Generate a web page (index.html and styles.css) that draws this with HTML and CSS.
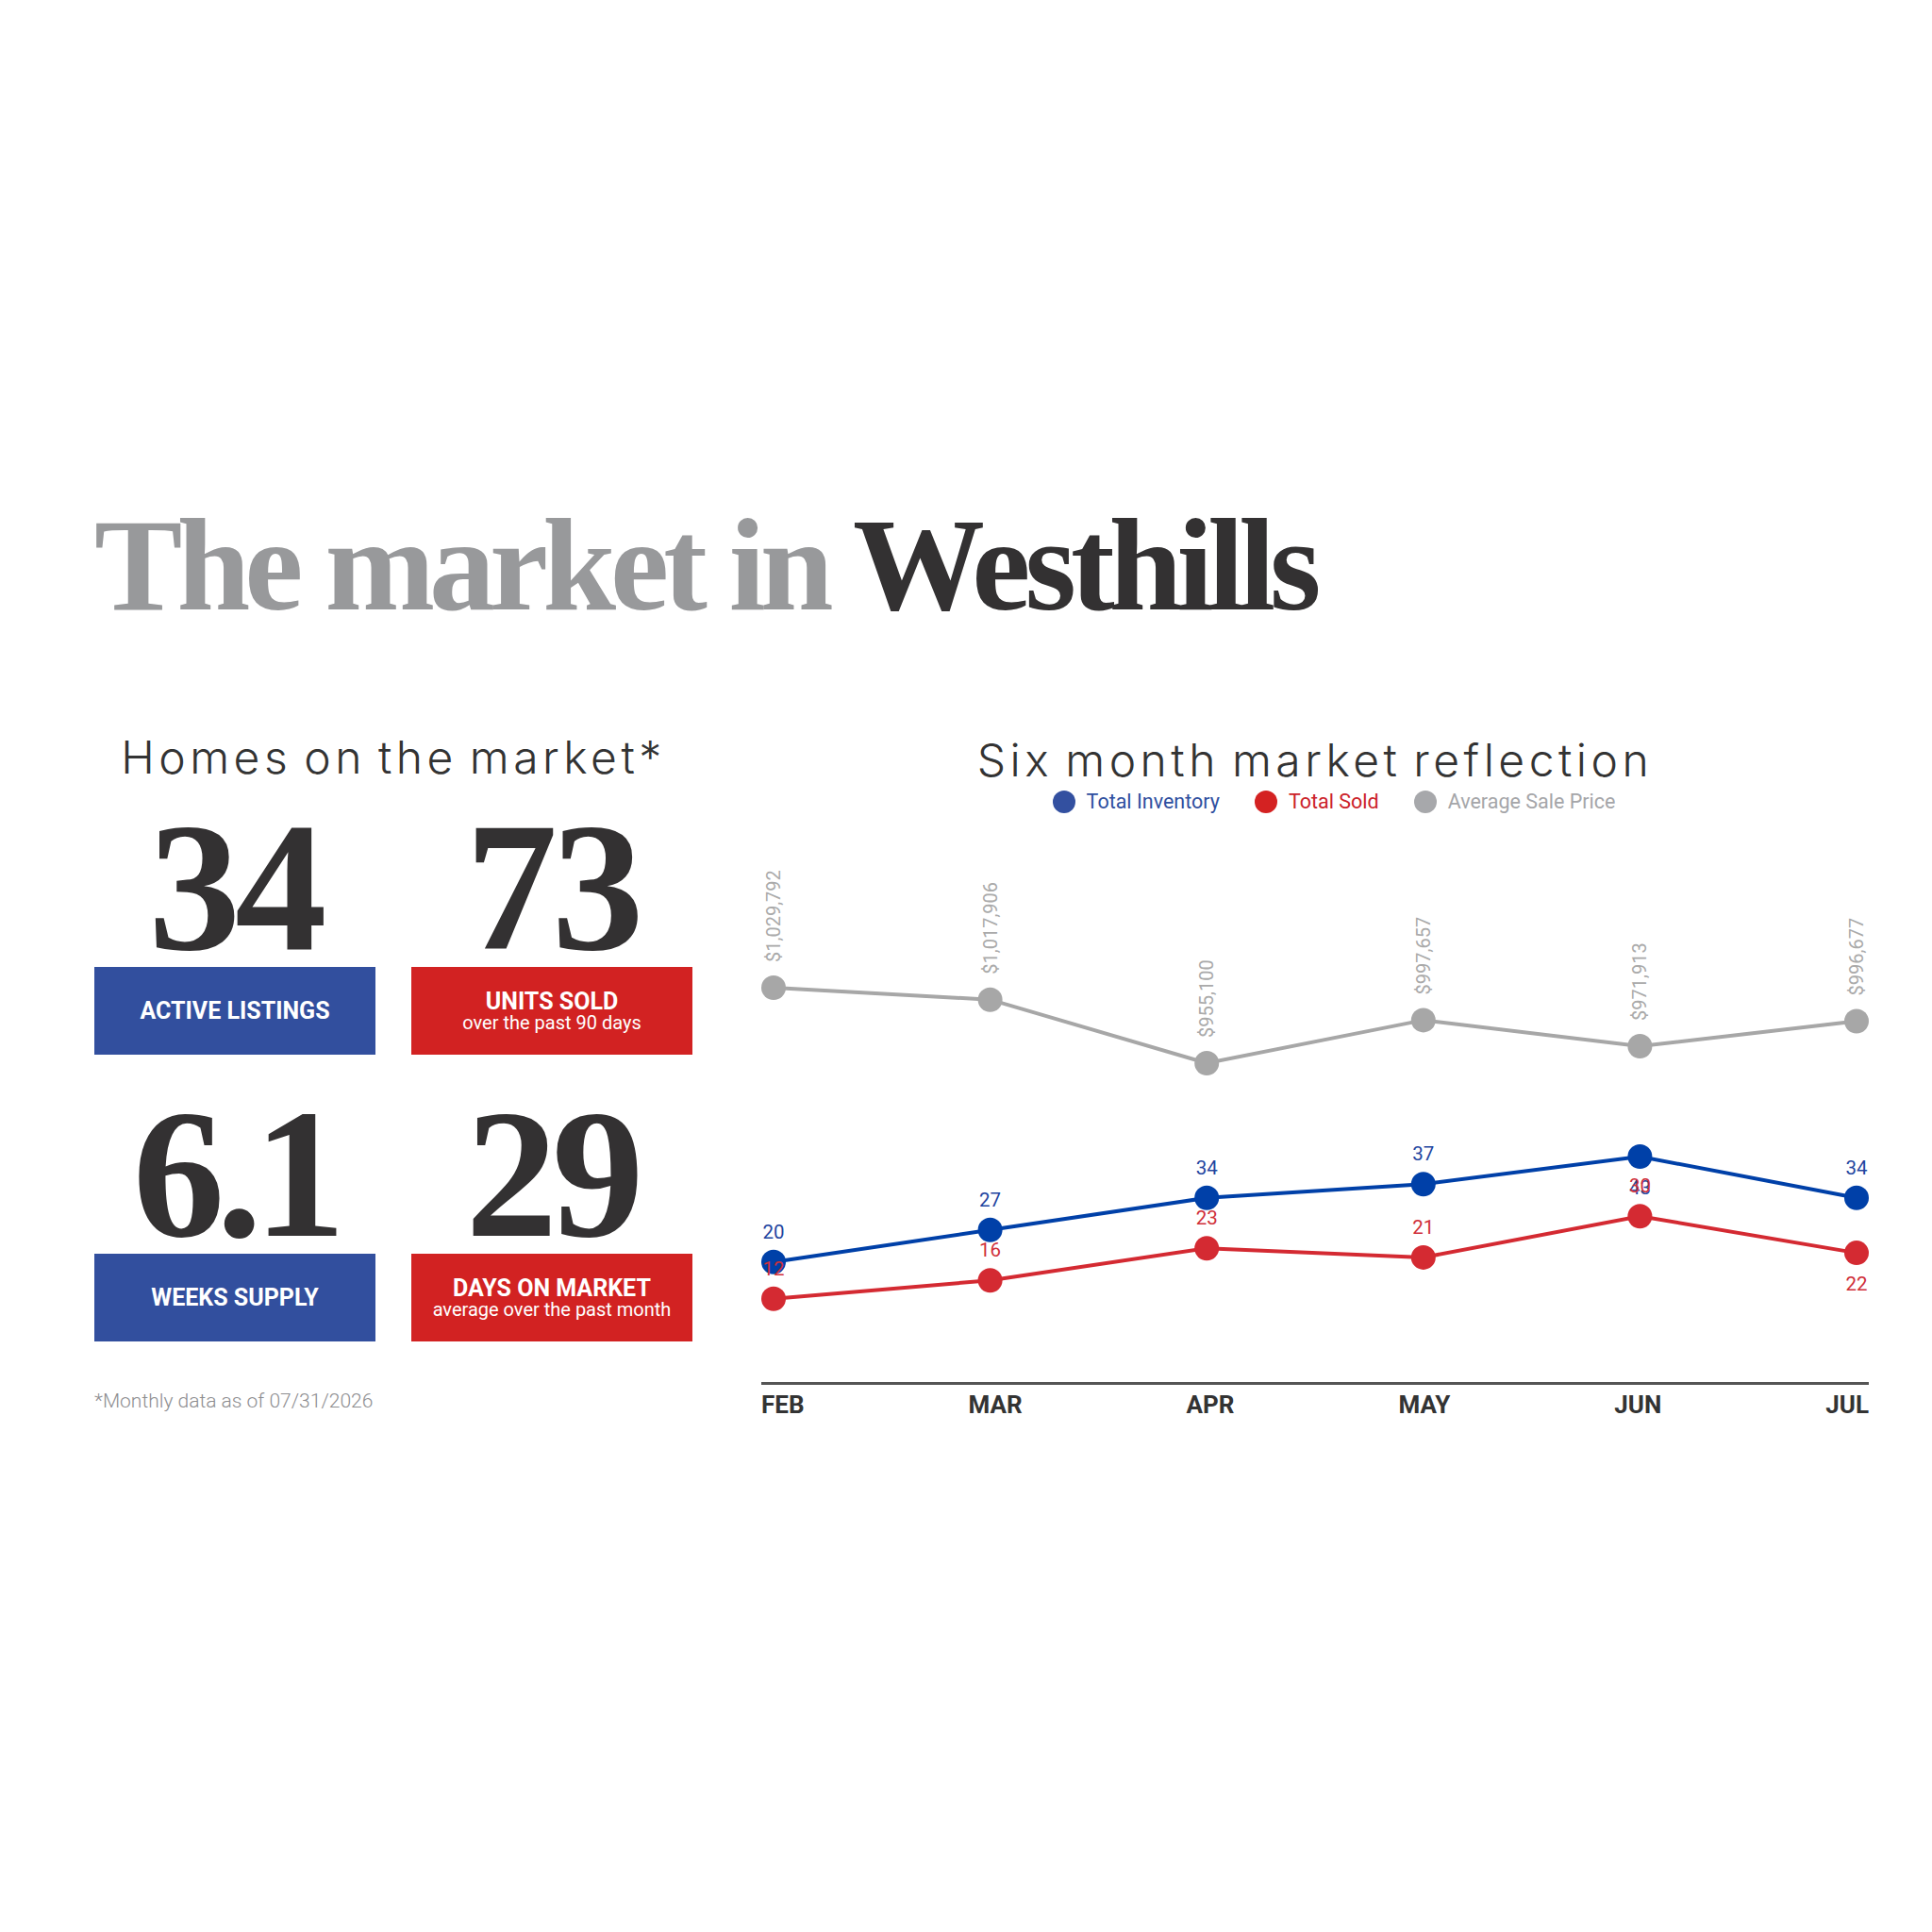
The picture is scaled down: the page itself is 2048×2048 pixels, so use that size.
FILE: index.html
```html
<!DOCTYPE html>
<html lang="en">
<head>
<meta charset="utf-8">
<title>The market in Westhills</title>
<link rel="stylesheet" href="styles.css">
</head>
<body>
<div class="page">
  <h1 class="title"><span class="muted">The market in</span> Westhills</h1>
  <div class="content">
    <section class="homes">
      <h2 class="section-title">Homes on the market*</h2>
      <div class="stats">
        <div class="stat">
          <div class="stat-num">34</div>
          <div class="stat-label blue"><strong>ACTIVE LISTINGS</strong></div>
        </div>
        <div class="stat">
          <div class="stat-num">73</div>
          <div class="stat-label red"><strong>UNITS SOLD</strong><small>over the past 90 days</small></div>
        </div>
        <div class="stat">
          <div class="stat-num tight">6.1</div>
          <div class="stat-label blue"><strong>WEEKS SUPPLY</strong></div>
        </div>
        <div class="stat">
          <div class="stat-num">29</div>
          <div class="stat-label red"><strong>DAYS ON MARKET</strong><small>average over the past month</small></div>
        </div>
      </div>
      <p class="note">*Monthly data as of 07/31/2026</p>
    </section>
    <section class="chart">
      <h2 class="section-title chart-title">Six month market reflection</h2>
      <ul class="legend">
        <li class="legend-item inv"><span class="dot dot-blue"></span>Total Inventory</li>
        <li class="legend-item sold"><span class="dot dot-red"></span>Total Sold</li>
        <li class="legend-item price"><span class="dot dot-gray"></span>Average Sale Price</li>
      </ul>
      <svg class="plot" viewBox="0 0 1174 564" width="1174" height="564" xmlns="http://www.w3.org/2000/svg">
        <g class="series-gray">
          <polyline points="13,146 242.6,158.7 472.2,226 701.8,180.4 931.4,208 1161,181.5" fill="none" stroke="#a7a7a7" stroke-width="4"/>
          <circle cx="13" cy="146" r="13" fill="#a7a7a7"/>
          <circle cx="242.6" cy="158.7" r="13" fill="#a7a7a7"/>
          <circle cx="472.2" cy="226" r="13" fill="#a7a7a7"/>
          <circle cx="701.8" cy="180.4" r="13" fill="#a7a7a7"/>
          <circle cx="931.4" cy="208" r="13" fill="#a7a7a7"/>
          <circle cx="1161" cy="181.5" r="13" fill="#a7a7a7"/>
        </g>
        <g class="series-blue">
          <polyline points="13,436.8 242.6,402.8 472.2,368.8 701.8,354.2 931.4,325 1161,368.8" fill="none" stroke="#0040a8" stroke-width="4"/>
          <circle cx="13" cy="436.8" r="13" fill="#0040a8"/>
          <circle cx="242.6" cy="402.8" r="13" fill="#0040a8"/>
          <circle cx="472.2" cy="368.8" r="13" fill="#0040a8"/>
          <circle cx="701.8" cy="354.2" r="13" fill="#0040a8"/>
          <circle cx="931.4" cy="325" r="13" fill="#0040a8"/>
          <circle cx="1161" cy="368.8" r="13" fill="#0040a8"/>
        </g>
        <g class="series-red">
          <polyline points="13,475.7 242.6,456.2 472.2,422.2 701.8,431.9 931.4,388.2 1161,427.1" fill="none" stroke="#d42a32" stroke-width="4"/>
          <circle cx="13" cy="475.7" r="13" fill="#d42a32"/>
          <circle cx="242.6" cy="456.2" r="13" fill="#d42a32"/>
          <circle cx="472.2" cy="422.2" r="13" fill="#d42a32"/>
          <circle cx="701.8" cy="431.9" r="13" fill="#d42a32"/>
          <circle cx="931.4" cy="388.2" r="13" fill="#d42a32"/>
          <circle cx="1161" cy="427.1" r="13" fill="#d42a32"/>
        </g>
        <g class="labels-gray">
          <text transform="translate(20,119) rotate(-90)">$1,029,792</text>
          <text transform="translate(249.6,131.7) rotate(-90)">$1,017,906</text>
          <text transform="translate(479.2,199) rotate(-90)">$955,100</text>
          <text transform="translate(708.8,153.4) rotate(-90)">$997,657</text>
          <text transform="translate(938.4,181) rotate(-90)">$971,913</text>
          <text transform="translate(1168,154.5) rotate(-90)">$996,677</text>
        </g>
        <g class="labels-blue">
          <text x="13" y="411.8">20</text>
          <text x="242.6" y="377.8">27</text>
          <text x="472.2" y="343.8">34</text>
          <text x="701.8" y="329.2">37</text>
          <text x="931.4" y="365">43</text>
          <text x="1161" y="343.8">34</text>
        </g>
        <g class="labels-red">
          <text x="13" y="450.7">12</text>
          <text x="242.6" y="431.2">16</text>
          <text x="472.2" y="397.2">23</text>
          <text x="701.8" y="406.9">21</text>
          <text x="931.4" y="363.2">30</text>
          <text x="1161" y="467.1">22</text>
        </g>
      </svg>
      <div class="months">
        <span>FEB</span><span>MAR</span><span>APR</span><span>MAY</span><span>JUN</span><span>JUL</span>
      </div>
    </section>
  </div>
</div>
</body>
</html>
```

FILE: styles.css
```css
body {
  margin: 0;
  background: #ffffff;
}

.page {
  width: 1881px;
  padding: 529px 0 0 100px;
}

.title {
  margin: 0;
  font-family: "Liberation Serif", "Times New Roman", serif;
  font-weight: 700;
  font-size: 140px;
  line-height: 140px;
  letter-spacing: -6px;
  color: #333132;
  white-space: nowrap;
}

.muted {
  color: #98999b;
}

.content {
  display: grid;
  grid-template-columns: 634px 1174px;
  column-gap: 73px;
  margin-top: 110px;
}

.section-title {
  margin: 0;
  font-family: Inter, "DejaVu Sans", sans-serif;
  font-weight: 300;
  font-size: 48px;
  line-height: 48px;
  letter-spacing: 4.5px;
  word-spacing: -5px;
  text-align: center;
  color: #333333;
  white-space: nowrap;
}

.chart-title {
  margin-top: 3px;
}

.stats {
  display: grid;
  grid-template-columns: 298px 298px;
  column-gap: 38px;
  row-gap: 41px;
  margin-top: 28px;
}

.stat-num {
  font-family: "Liberation Serif", "Times New Roman", serif;
  font-weight: 700;
  font-size: 195px;
  line-height: 170px;
  letter-spacing: -6px;
  text-align: center;
  color: #333132;
}

.stat-num.tight {
  letter-spacing: -9px;
}

.stat-label {
  height: 93px;
  display: flex;
  flex-direction: column;
  justify-content: center;
  align-items: center;
  color: #ffffff;
  font-family: Roboto, "Liberation Sans", sans-serif;
}

.stat-label strong {
  font-size: 25px;
  line-height: 24px;
  font-weight: 700;
}

.stat-label small {
  font-size: 20px;
  line-height: 20px;
  font-weight: 400;
}

.blue {
  background: #324f9e;
}

.red {
  background: #d22222;
}

.note {
  margin: 50px 0 0;
  font-family: Roboto, "Liberation Sans", sans-serif;
  font-weight: 300;
  font-size: 21px;
  line-height: 26px;
  color: #8d8d90;
}

.legend {
  display: flex;
  justify-content: center;
  gap: 37px;
  margin: 8px 0 0;
  padding: 0 0 0 40px;
  list-style: none;
  font-family: Roboto, "Liberation Sans", sans-serif;
  font-size: 21.5px;
  line-height: 24px;
}

.legend-item {
  display: flex;
  align-items: center;
  gap: 12px;
}

.dot {
  width: 24px;
  height: 24px;
  border-radius: 50%;
}

.dot-blue { background: #3350a0; }
.dot-red { background: #d42222; }
.dot-gray { background: #a7a8ab; }

.inv { color: #2f4f9f; }
.sold { color: #cc2229; }
.price { color: #a5a6a9; }

.plot {
  display: block;
  margin-top: 39px;
  overflow: visible;
}

.labels-gray text {
  font-family: Roboto, "Liberation Sans", sans-serif;
  font-size: 20px;
  fill: #aaaaaa;
}

.labels-blue text,
.labels-red text {
  font-family: Roboto, "Liberation Sans", sans-serif;
  font-size: 20.5px;
  text-anchor: middle;
}

.labels-blue text { fill: #1f45a0; }
.labels-red text { fill: #d0303a; }

.months {
  display: flex;
  justify-content: space-between;
  border-top: 3px solid #555555;
  padding-top: 6px;
  font-family: Roboto, "Liberation Sans", sans-serif;
  font-weight: 700;
  font-size: 26px;
  line-height: 30px;
  color: #333333;
}
```
